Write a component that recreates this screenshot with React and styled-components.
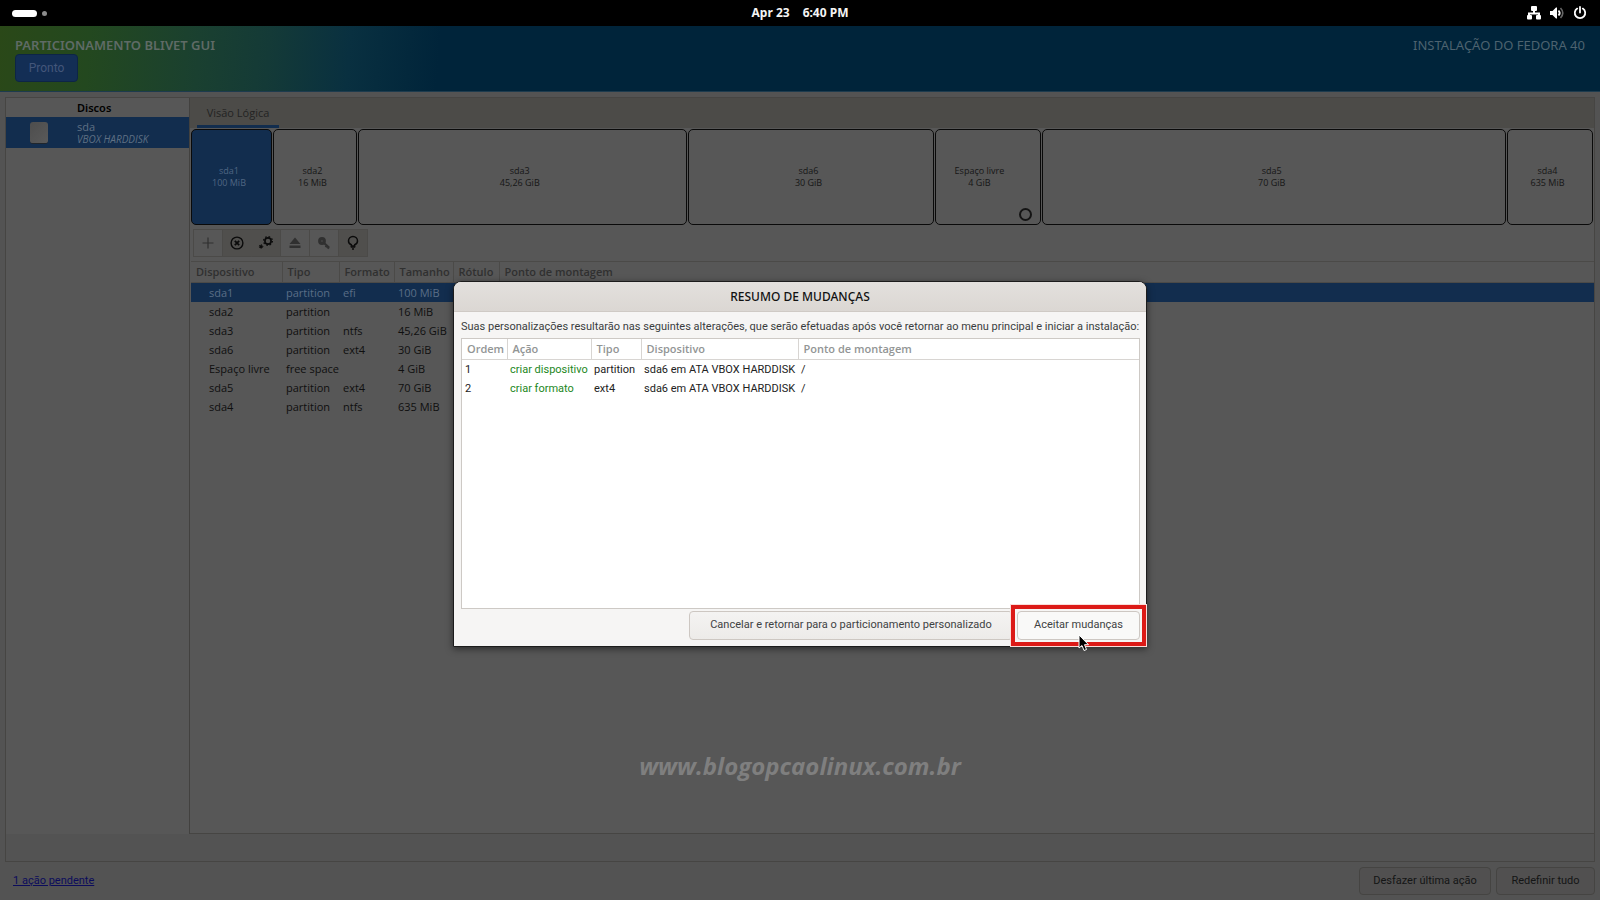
import React from "react";
import styled, { createGlobalStyle, css } from "styled-components";

const ui = '"Open Sans", "Noto Sans", sans-serif';
const heading = '"Noto Sans", "Open Sans", sans-serif';
const narrow = 'Roboto, "Noto Sans", sans-serif';

const Global = createGlobalStyle`
  *, *::before, *::after { box-sizing: border-box; }
  body { margin: 0; background: #535353; font-family: ${ui}; font-size: 11px; line-height: 16px; color: #0f0f0f; }
  button { font: inherit; color: inherit; margin: 0; }
  table { border-collapse: collapse; }
`;

const Screen = styled.div`
  position: relative;
  display: flex;
  flex-direction: column;
  min-height: 100vh;
  overflow: hidden;
`;

const TopBar = styled.header`
  display: grid;
  grid-template-columns: 1fr auto 1fr;
  align-items: center;
  height: 26px;
  padding: 0 12px;
  background: #000;
  color: #f4f4f4;
`;

const Workspaces = styled.div`
  display: flex;
  align-items: center;
  gap: 5px;
`;

const Pill = styled.span`
  width: 25px;
  height: 7px;
  border-radius: 4px;
  background: #fff;
`;

const Dot = styled.span`
  width: 5px;
  height: 5px;
  border-radius: 50%;
  background: #8c8c8c;
`;

const Clock = styled.time`
  display: flex;
  gap: 13px;
  font-family: ${heading};
  font-size: 12px;
  line-height: 18px;
  font-weight: 700;
`;

const Tray = styled.div`
  display: flex;
  justify-content: flex-end;
  align-items: center;
  gap: 9px;
  padding-right: 1px;
  svg { width: 14px; height: 14px; display: block; }
`;

const Banner = styled.div`
  display: flex;
  justify-content: space-between;
  align-items: flex-start;
  height: 66px;
  padding: 10px 15px 0;
  background: linear-gradient(95deg, #2a4818 0, #23481f 90px, #1a4030 200px, #143a37 270px, #093040 350px, #00243a 440px);
  border-bottom: 1px solid #1d3b4e;
  color: #5f6b66;
  font-family: ${heading};
  font-size: 13px;
  line-height: 18px;
`;

const BannerTitle = styled.h1`
  margin: 0;
  font-size: 13px;
  line-height: 18px;
  font-weight: 600;
`;

const BannerSide = styled.div`
  color: #4d6370;
`;

const DoneButton = styled.button`
  display: block;
  width: 63px;
  height: 28px;
  padding: 0;
  border: 1px solid #0d2546;
  border-radius: 4px;
  background: #132e55;
  color: #43567a;
  font-family: ${narrow};
  font-size: 12px;
`;

const Main = styled.main`
  flex: 1;
  display: flex;
  flex-direction: column;
  margin: 5px 5px 0;
  border: 1px solid #464543;
`;

const Columns = styled.div`
  flex: 1;
  display: grid;
  grid-template-columns: 184px minmax(0, 1fr);
`;

const Disks = styled.aside`
  border-right: 1px solid #42413f;
  background: #575757;
`;

const DisksTitle = styled.h2`
  margin: 0;
  padding: 1px 0 0 71px;
  height: 19px;
  font-family: ${heading};
  font-size: 11px;
  line-height: 18px;
  font-weight: 600;
  color: #000;
`;

const DiskRow = styled.div`
  display: flex;
  align-items: center;
  height: 31px;
  padding-left: 24px;
  gap: 29px;
  background: #122d4e;
  color: #5f7084;
  line-height: 12px;
`;

const DiskIcon = styled.span`
  width: 18px;
  height: 22px;
  border-radius: 3px;
  border-bottom: 1px solid #20262c;
  background: linear-gradient(135deg, #4d4d4d, #5a5a5a);
`;

const DiskModel = styled.em`
  display: block;
  font-size: 10px;
`;

const Work = styled.section`
  display: flex;
  flex-direction: column;
  background: #575757;
  border-bottom: 1px solid #464543;
`;

const Tabs = styled.div`
  display: flex;
  height: 30px;
  padding-left: 7px;
  background: #4c4b48;
`;

const Tab = styled.button`
  width: 82px;
  padding: 2px 0 0;
  border: 0;
  border-bottom: 3px solid #122d4e;
  background: none;
  color: #232323;
`;

const Map = styled.div`
  display: flex;
  gap: 1px;
  height: 97px;
  padding: 1px 1px 0;
`;

const Partition = styled.div`
  position: relative;
  flex: ${(p) => `${p.$size} 1 ${p.$size}px`};
  min-width: 0;
  display: flex;
  align-items: center;
  border: 1px solid #0a0a0a;
  border-radius: 5px;
  font-size: 9px;
  line-height: 12px;
  text-align: center;
  color: #161616;
  ${(p) => p.$active && css`background: #122d4e; color: #506683;`}
`;

const PartitionLabel = styled.div`
  flex: 1;
  padding-right: ${(p) => (p.$free ? "18px" : "5px")};
  white-space: nowrap;
`;

const FreeMark = styled.span`
  position: absolute;
  right: 8px;
  bottom: 3px;
  width: 13px;
  height: 13px;
  border: 2px solid #141414;
  border-radius: 50%;
`;

const Toolbar = styled.div`
  display: flex;
  height: 28px;
  margin: 4px 0 4px 3px;
`;

const Tool = styled.button`
  display: grid;
  place-items: center;
  width: 30px;
  height: 28px;
  margin-right: -1px;
  padding: 0;
  border: 1px solid #4b4a48;
  border-left-color: ${(p) => (p.$joined ? "transparent" : "#4b4a48")};
  background: ${(p) => (p.disabled ? "transparent" : "#504f4d")};
  color: ${(p) => (p.disabled ? "#303030" : "#0b0b0b")};
  svg { width: 16px; height: 16px; display: block; }
`;

const TableArea = styled.div`
  padding-left: 1px;
`;

const DeviceTable = styled.table`
  width: 100%;
  table-layout: fixed;
  th {
    height: 21px;
    padding: 0 5px;
    border: solid #4b4a48;
    border-width: 1px 1px 1px 0;
    text-align: left;
    font-weight: 600;
    color: #303030;
  }
  th:last-child { border-right: 0; }
  td { height: 19px; padding: 1px 0 0 4px; white-space: nowrap; }
  td:first-child { padding-left: 18px; }
`;

const DeviceRow = styled.tr`
  line-height: 16px;
  ${(p) => p.$active && css`background: #122d4e; color: #5a6d86;`}
`;

const Status = styled.div`
  height: 27px;
  background: #535353;
`;

const Footer = styled.footer`
  display: flex;
  justify-content: flex-end;
  align-items: center;
  gap: 5px;
  height: 38px;
  padding: 0 5px 0 13px;
  font-family: ${narrow};
`;

const Pending = styled.a`
  margin-right: auto;
  color: #0c0c5c;
`;

const FooterButton = styled.button`
  height: 28px;
  width: ${(p) => p.$width}px;
  padding: 0;
  border: 1px solid #454442;
  border-radius: 4px;
  background: #515050;
  color: #141515;
`;

const Overlay = styled.div`
  position: absolute;
  inset: 27px 0 0;
  display: flex;
  justify-content: center;
  align-items: center;
`;

const Dialog = styled.section`
  position: relative;
  display: flex;
  flex-direction: column;
  width: 694px;
  border: 1px solid #1c1c1c;
  border-radius: 8px 8px 0 0;
  background: #f6f5f4;
  box-shadow: 0 2px 7px rgba(0, 0, 0, 0.5);
`;

const DialogTitle = styled.h2`
  margin: 0;
  height: 30px;
  border-bottom: 1px solid #cfcac5;
  border-radius: 7px 7px 0 0;
  background: linear-gradient(#e3e0dd, #dbd7d3);
  font-family: ${heading};
  font-size: 12px;
  line-height: 30px;
  font-weight: 500;
  text-align: center;
  color: #111;
`;

const DialogBody = styled.div`
  display: flex;
  flex-direction: column;
  gap: 2px;
  padding: 6px 6px 6px 7px;
`;

const Lead = styled.p`
  margin: 0;
  font-family: ${narrow};
  line-height: 18px;
  color: #3a3d3e;
  white-space: nowrap;
`;

const ListBox = styled.div`
  height: 271px;
  border: 1px solid #cdc9c5;
  background: #fff;
`;

const ActionTable = styled.table`
  width: 100%;
  table-layout: fixed;
  th {
    height: 21px;
    padding: 0 5px;
    border: solid #d8d5d2;
    border-width: 0 1px 1px 0;
    text-align: left;
    font-weight: 600;
    color: #929595;
  }
  th:last-child { border-right: 0; }
  td { height: 19px; padding: 2px 0 0 3px; font-family: ${narrow}; white-space: nowrap; color: #222; }
`;

const Act = styled.span`
  color: #1c871c;
`;

const Buttons = styled.div`
  display: flex;
  justify-content: flex-end;
  gap: 4px;
`;

const DialogButton = styled.button`
  position: relative;
  width: ${(p) => p.$width}px;
  height: 29px;
  padding: 0;
  border: 1px solid #cdc7c2;
  border-radius: 4px;
  background: ${(p) => (p.$hover ? "#f9f9f8" : "linear-gradient(#f4f3f2, #edebe9)")};
  color: #3e4243;
  font-family: ${narrow};
`;

const Highlight = styled.span`
  position: absolute;
  inset: -7px -7px;
  border: 4px solid #dc1a17;
  outline: 1px solid #fbdcd9;
  pointer-events: none;
`;

const Pointer = styled.svg`
  position: absolute;
  left: 60px;
  top: 22px;
  width: 12px;
  height: 18px;
`;

const Watermark = styled.div`
  position: absolute;
  left: 0;
  right: 0;
  bottom: 118px;
  text-align: center;
  font-size: 24px;
  line-height: 32px;
  font-weight: 700;
  font-style: italic;
  color: #7f7f7f;
`;

const disks = [
  { name: "sda1", size: "100 MiB", width: 81, active: true },
  { name: "sda2", size: "16 MiB", width: 84 },
  { name: "sda3", size: "45,26 GiB", width: 329 },
  { name: "sda6", size: "30 GiB", width: 247 },
  { name: "Espaço livre", size: "4 GiB", width: 106, free: true },
  { name: "sda5", size: "70 GiB", width: 464 },
  { name: "sda4", size: "635 MiB", width: 86 },
];

const devices = [
  ["sda1", "partition", "efi", "100 MiB"],
  ["sda2", "partition", "", "16 MiB"],
  ["sda3", "partition", "ntfs", "45,26 GiB"],
  ["sda6", "partition", "ext4", "30 GiB"],
  ["Espaço livre", "free space", "", "4 GiB"],
  ["sda5", "partition", "ext4", "70 GiB"],
  ["sda4", "partition", "ntfs", "635 MiB"],
];

const actions = [
  ["1", "criar dispositivo", "partition"],
  ["2", "criar formato", "ext4"],
];

const NetworkIcon = () => (
  <svg viewBox="0 0 14 14" fill="#fff">
    <rect x="4" y="0" width="6" height="5" rx="1" />
    <path d="M6 4h2v2.500h5V10h-2V8.500H3V10H1V6.500h5z" />
    <rect x="0" y="9" width="5" height="4.500" rx="1" />
    <rect x="9" y="9" width="5" height="4.500" rx="1" />
  </svg>
);

const VolumeIcon = () => (
  <svg viewBox="0 0 14 14" fill="none">
    <path d="M0 5h2.500L6 1.500h1v11H6L2.500 9H0z" fill="#fff" />
    <path d="M8.500 4.500q2.400 2.500 0 5" stroke="#fff" strokeWidth="1.800" />
    <path d="M10.500 2q4.600 5 0 10" stroke="#666" strokeWidth="1.600" />
  </svg>
);

const PowerIcon = () => (
  <svg viewBox="0 0 14 14" fill="none" stroke="#fff" strokeWidth="1.800" strokeLinecap="round">
    <path d="M4.200 2.600a5.200 5.200 0 1 0 5.600 0M7 1v5.500" />
  </svg>
);

const PlusIcon = () => (
  <svg viewBox="0 0 16 16" fill="none" stroke="currentColor" strokeWidth="1.200">
    <path d="M8 2.500v11M2.500 8h11" />
  </svg>
);

const RemoveIcon = () => (
  <svg viewBox="0 0 16 16" fill="none" stroke="currentColor" strokeWidth="1.400">
    <circle cx="8" cy="8" r="5.900" />
    <path d="M5.800 5.800l4.400 4.400M10.200 5.800l-4.400 4.400" strokeWidth="1.800" />
  </svg>
);

const GearsIcon = () => (
  <svg viewBox="0 0 16 16" fill="none" stroke="currentColor">
    <circle cx="10" cy="6" r="3.100" strokeWidth="1.700" />
    <circle cx="10" cy="6" r="4.400" strokeWidth="1.200" strokeDasharray="1.600 1.856" />
    <circle cx="3" cy="11.500" r="1.500" fill="currentColor" stroke="none" />
    <circle cx="3" cy="11.500" r="1.800" strokeWidth="1" strokeDasharray="1 0.885" />
  </svg>
);

const EjectIcon = () => (
  <svg viewBox="0 0 16 16" fill="currentColor">
    <path d="M8 2.500L13.500 9h-11zM2.500 10.500h11V13h-11z" />
  </svg>
);

const KeyIcon = () => (
  <svg viewBox="0 0 16 16" fill="none" stroke="currentColor">
    <circle cx="6" cy="6" r="2.300" strokeWidth="3.200" />
    <path d="M8 8l5 4.500M10.800 10.500l-1 1.800M13 12l-1.500 1.500" strokeWidth="2.200" />
  </svg>
);

const BulbIcon = () => (
  <svg viewBox="0 0 16 16" fill="none" stroke="currentColor" strokeWidth="1.500">
    <path d="M6.300 11V9.800Q3.500 8.600 3.500 6a4.500 4.500 0 0 1 9 0q0 2.600-2.800 3.800V11z" />
    <path d="M5.800 12h4.400M7 14h2" strokeWidth="1.600" />
  </svg>
);

export default function App() {
  return (
    <Screen>
      <Global />
      <TopBar>
        <Workspaces><Pill /><Dot /></Workspaces>
        <Clock><span>Apr 23</span><span>6:40 PM</span></Clock>
        <Tray><NetworkIcon /><VolumeIcon /><PowerIcon /></Tray>
      </TopBar>
      <Banner>
        <div>
          <BannerTitle>PARTICIONAMENTO BLIVET GUI</BannerTitle>
          <DoneButton>Pronto</DoneButton>
        </div>
        <BannerSide>INSTALAÇÃO DO FEDORA 40</BannerSide>
      </Banner>
      <Main>
        <Columns>
          <Disks>
            <DisksTitle>Discos</DisksTitle>
            <DiskRow>
              <DiskIcon />
              <div>sda<DiskModel>VBOX HARDDISK</DiskModel></div>
            </DiskRow>
          </Disks>
          <Work>
            <Tabs><Tab>Visão Lógica</Tab></Tabs>
            <Map>
              {disks.map((d) => (
                <Partition key={d.name} $size={d.width} $active={d.active}>
                  <PartitionLabel $free={d.free}>{d.name}<br />{d.size}</PartitionLabel>
                  {d.free && <FreeMark />}
                </Partition>
              ))}
            </Map>
            <Toolbar>
              <Tool disabled aria-label="Adicionar"><PlusIcon /></Tool>
              <Tool aria-label="Remover"><RemoveIcon /></Tool>
              <Tool $joined aria-label="Editar"><GearsIcon /></Tool>
              <Tool disabled aria-label="Desmontar"><EjectIcon /></Tool>
              <Tool disabled aria-label="Desbloquear"><KeyIcon /></Tool>
              <Tool aria-label="Informações"><BulbIcon /></Tool>
            </Toolbar>
            <TableArea>
              <DeviceTable>
                <colgroup>
                  <col width="91" /><col width="57" /><col width="55" />
                  <col width="59" /><col width="46" /><col />
                </colgroup>
                <thead>
                  <tr>
                    <th>Dispositivo</th><th>Tipo</th><th>Formato</th>
                    <th>Tamanho</th><th>Rótulo</th><th>Ponto de montagem</th>
                  </tr>
                </thead>
                <tbody>
                  {devices.map((row, i) => (
                    <DeviceRow key={row[0]} $active={i === 0}>
                      {row.map((cell, j) => <td key={j}>{cell}</td>)}
                      <td /><td />
                    </DeviceRow>
                  ))}
                </tbody>
              </DeviceTable>
            </TableArea>
          </Work>
        </Columns>
        <Status />
      </Main>
      <Footer>
        <Pending href="#pendente">1 ação pendente</Pending>
        <FooterButton $width={132}>Desfazer última ação</FooterButton>
        <FooterButton $width={99}>Redefinir tudo</FooterButton>
      </Footer>
      <Watermark>www.blogopcaolinux.com.br</Watermark>
      <Overlay>
        <Dialog role="dialog" aria-labelledby="resumo">
          <DialogTitle id="resumo">RESUMO DE MUDANÇAS</DialogTitle>
          <DialogBody>
            <Lead>
              Suas personalizações resultarão nas seguintes alterações, que serão efetuadas após você retornar ao menu principal e iniciar a instalação:
            </Lead>
            <ListBox>
              <ActionTable>
                <colgroup>
                  <col width="45" /><col width="84" /><col width="50" />
                  <col width="157" /><col />
                </colgroup>
                <thead>
                  <tr>
                    <th>Ordem</th><th>Ação</th><th>Tipo</th>
                    <th>Dispositivo</th><th>Ponto de montagem</th>
                  </tr>
                </thead>
                <tbody>
                  {actions.map(([order, action, type]) => (
                    <tr key={order}>
                      <td>{order}</td>
                      <td><Act>{action}</Act></td>
                      <td>{type}</td>
                      <td>sda6 em ATA VBOX HARDDISK</td>
                      <td>/</td>
                    </tr>
                  ))}
                </tbody>
              </ActionTable>
            </ListBox>
            <Buttons>
              <DialogButton $width={324}>Cancelar e retornar para o particionamento personalizado</DialogButton>
              <DialogButton $width={123} $hover>
                Aceitar mudanças
                <Highlight />
                <Pointer viewBox="0 0 12 18">
                  <path d="M1 1v13l3-2.500 2 5 2.500-1-2-4.800h4z" fill="#000" stroke="#fff" strokeWidth="1" />
                </Pointer>
              </DialogButton>
            </Buttons>
          </DialogBody>
        </Dialog>
      </Overlay>
    </Screen>
  );
}
